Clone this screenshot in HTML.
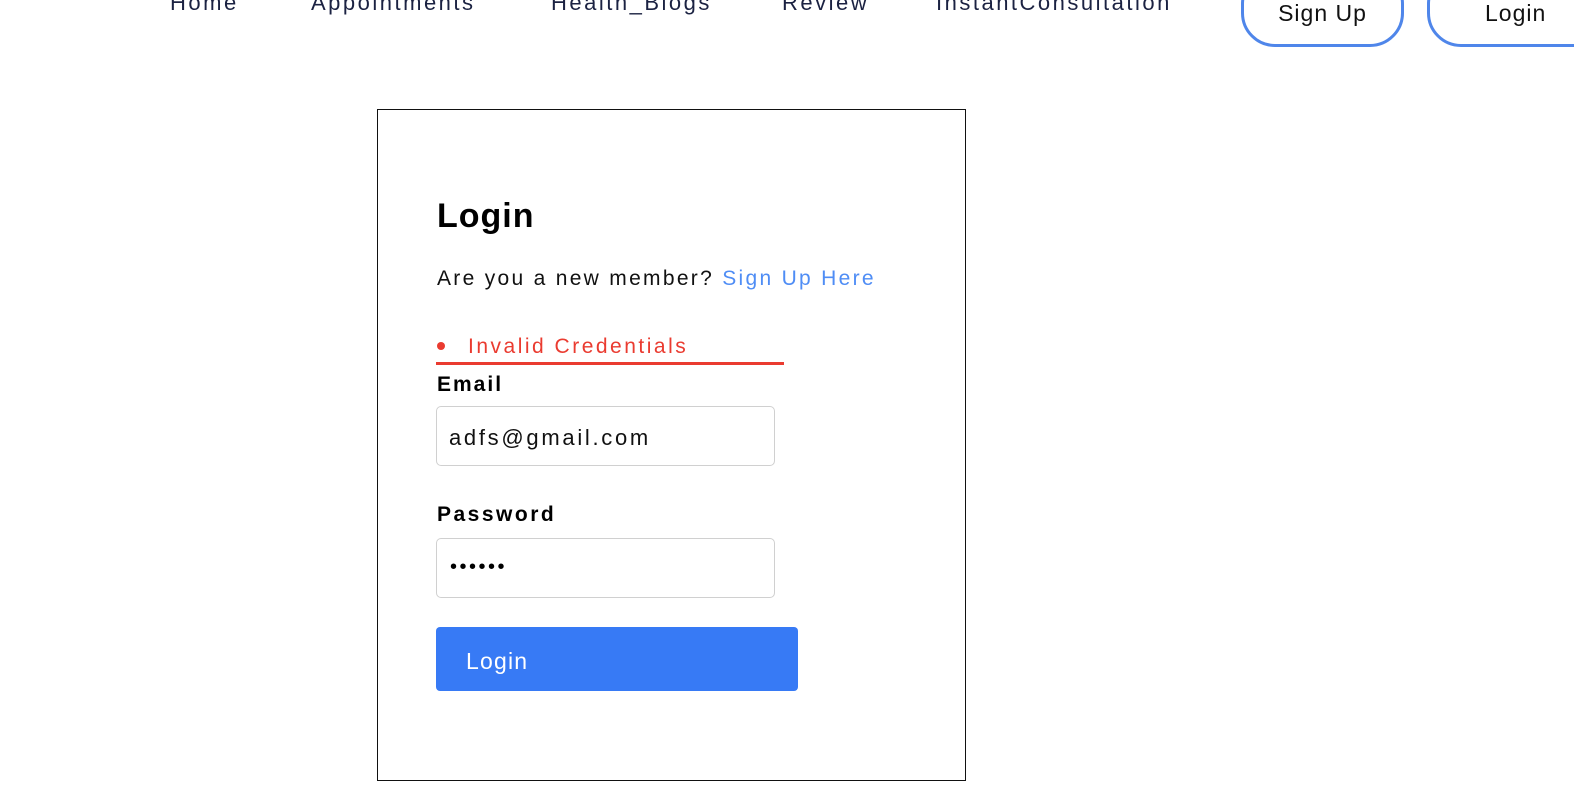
<!DOCTYPE html>
<html><head><meta charset="utf-8"><style>
*{margin:0;padding:0;box-sizing:border-box}
body{width:1574px;height:792px;overflow:hidden;background:#fff;font-family:"Liberation Sans",sans-serif;position:relative}
.a{position:absolute;white-space:nowrap}
.nav{font-size:22px;color:#1b2242;top:-9px;line-height:24px;letter-spacing:2.5px}
.pill{position:absolute;border:3px solid #4f86ea;border-radius:34px;font-size:23px;color:#111;text-align:center;letter-spacing:1px}
.card{position:absolute;left:377px;top:109px;width:589px;height:672px;border:1px solid #111}
.inp{position:absolute;left:436px;width:339px;height:60px;border:1px solid #d0d0d0;border-radius:5px}
</style></head><body>
<div class="a nav" style="left:170px">Home</div>
<div class="a nav" style="left:311px">Appointments</div>
<div class="a nav" style="left:551px">Health_Blogs</div>
<div class="a nav" style="left:782px">Review</div>
<div class="a nav" style="left:936px">InstantConsultation</div>
<div class="pill" style="left:1241px;top:-30px;width:163px;height:77px;line-height:80px">Sign Up</div>
<div class="pill" style="left:1427px;top:-30px;width:200px;height:77px;line-height:80px;text-align:left;padding-left:55px">Login</div>
<div class="card"></div>
<div class="a" style="left:437px;top:196px;font-size:34px;font-weight:bold;color:#000;line-height:40px;letter-spacing:1px">Login</div>
<div class="a" style="left:437px;top:266px;font-size:21px;color:#111;line-height:26px;letter-spacing:2.3px">Are you a new member? <span style="color:#4f8df5">Sign Up Here</span></div>
<div class="a" style="left:437px;top:342px;width:8px;height:8px;border-radius:50%;background:#ea3b30"></div>
<div class="a" style="left:468px;top:334px;font-size:21px;color:#ea3b30;line-height:26px;letter-spacing:2.5px">Invalid Credentials</div>
<div class="a" style="left:436px;top:362px;width:348px;height:3px;background:#ea3b30"></div>
<div class="a" style="left:437px;top:372px;font-size:21px;font-weight:bold;color:#000;line-height:26px;letter-spacing:2px">Email</div>
<div class="inp" style="top:406px"></div>
<div class="a" style="left:449px;top:425px;font-size:22px;color:#111;line-height:26px;letter-spacing:2.7px">adfs@gmail.com</div>
<div class="a" style="left:437px;top:502px;font-size:21px;font-weight:bold;color:#000;line-height:26px;letter-spacing:2.5px">Password</div>
<div class="inp" style="top:538px"></div>
<div class="a" style="left:450px;top:554px;font-size:20px;color:#000;line-height:26px;letter-spacing:2.5px">••••••</div>
<div class="a" style="left:436px;top:627px;width:362px;height:64px;background:#377af5;border-radius:4px"></div>
<div class="a" style="left:466px;top:648px;font-size:23px;color:#fff;line-height:26px;letter-spacing:1.2px">Login</div>
</body></html>
